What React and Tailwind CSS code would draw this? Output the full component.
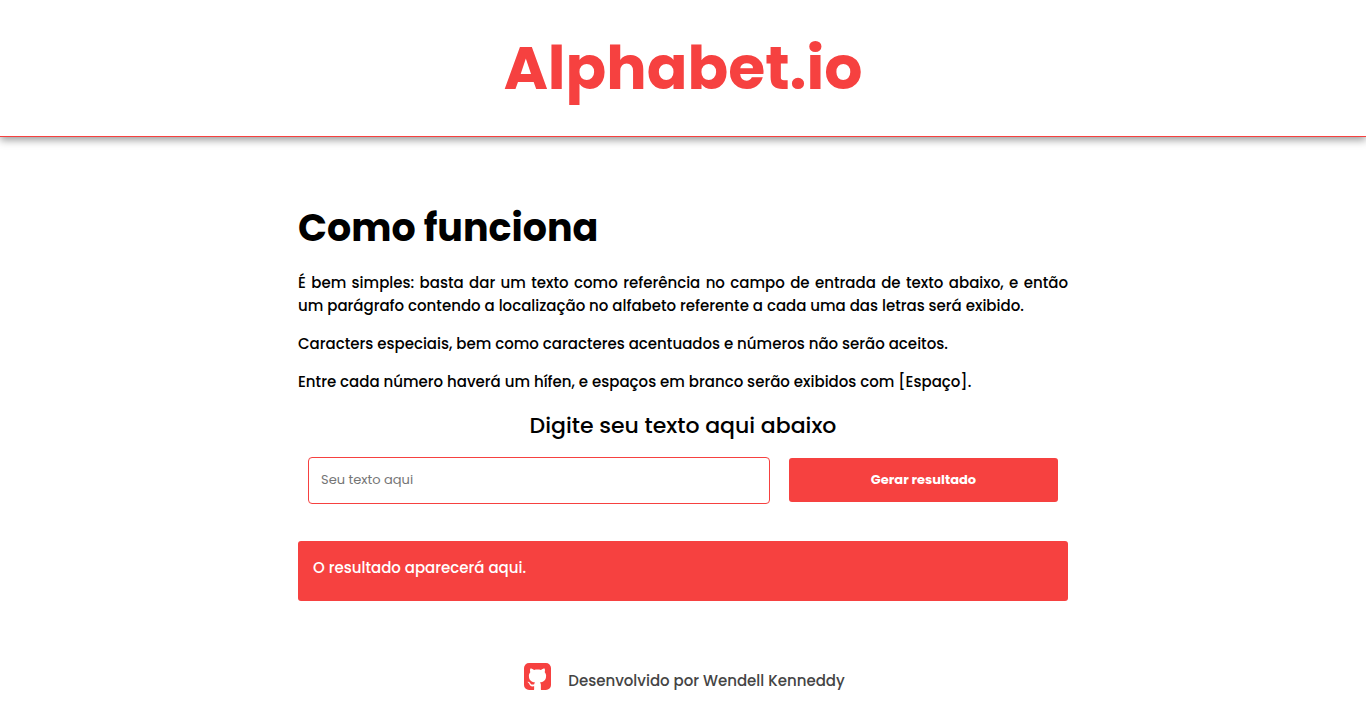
function GithubSquareIcon({ className }) {
  return (
    <svg viewBox="2 2 20 20" className={className} fill="currentColor" aria-hidden="true">
      <path d="M5.75,2H18.25A3.75,3.75 0 0,1 22,5.75V18.25A3.75,3.75 0 0,1 18.25,22H15.1C14.5,22 14.5,21.4 14.5,21V18.26C14.5,17.33 14.17,16.72 13.81,16.41C16.04,16.16 18.38,15.32 18.38,11.5C18.38,10.39 18,9.5 17.35,8.79C17.45,8.54 17.8,7.5 17.25,6.15C17.25,6.15 16.41,5.88 14.5,7.17C13.71,6.95 12.85,6.84 12,6.84C11.15,6.84 10.29,6.95 9.5,7.17C7.59,5.88 6.75,6.15 6.75,6.15C6.2,7.5 6.55,8.54 6.65,8.79C6,9.5 5.62,10.39 5.62,11.5C5.62,15.31 7.95,16.17 10.17,16.42C9.89,16.67 9.63,17.11 9.54,17.76C8.97,18 7.5,18.45 6.63,16.93C6.63,16.93 6.1,15.97 5.1,15.9C5.1,15.9 4.12,15.88 5,16.5C5,16.5 5.68,16.81 6.14,17.97C6.14,17.97 6.73,19.91 9.5,19.31V21C9.5,21.4 9.5,22 8.9,22H5.75A3.75,3.75 0 0,1 2,18.25V5.75A3.75,3.75 0 0,1 5.75,2Z" />
    </svg>
  );
}

export default function App() {
  return (
    <div className="bg-white font-[Poppins,'Open_Sans',sans-serif] text-black">
      <header className="flex items-center justify-center border-b border-[#f64140] py-[23px] shadow-[0_3px_8px_rgba(0,0,0,0.4)]">
        <h1 className="text-[60px] leading-[90px] font-bold text-[#f64140]">Alphabet.io</h1>
      </header>
      <main className="mx-auto mt-[61px] w-full max-w-[770px]">
        <h2 className="text-[38px] leading-[60px] font-bold">Como funciona</h2>
        <div className="mt-[13px] flex flex-col gap-[15px] text-justify text-[15px] leading-[23px] font-medium">
          <p>É bem simples: basta dar um texto como referência no campo de entrada de texto abaixo, e então um parágrafo contendo a localização no alfabeto referente a cada uma das letras será exibido.</p>
          <p>Caracters especiais, bem como caracteres acentuados e números não serão aceitos.</p>
          <p>Entre cada número haverá um hífen, e espaços em branco serão exibidos com [Espaço].</p>
        </div>
        <form className="mt-[15px]" onSubmit={(e) => e.preventDefault()}>
          <label htmlFor="texto" className="block text-center text-[22px] leading-[35px] font-medium">Digite seu texto aqui abaixo</label>
          <div className="mt-[14px] flex items-start gap-[19px] px-[10px]">
            <input id="texto" placeholder="Seu texto aqui" className="h-[47px] min-w-0 basis-[462px] rounded-[4px] border border-[#f64140] px-3 pb-[2px] text-[13px] outline-none placeholder:text-[#757575]" />
            <button className="mt-px h-11 min-w-0 flex-1 rounded-[3px] bg-[#f64140] text-[13px] font-bold text-white">Gerar resultado</button>
          </div>
        </form>
        <div className="mt-[37px] rounded-[3px] bg-[#f64140] px-[15px] pt-[15px] pb-[22px] text-[15px] leading-[23px] font-medium text-white">
          <p>O resultado aparecerá aqui.</p>
        </div>
      </main>
      <footer className="mt-[62px] flex items-start justify-center gap-[17px] pl-[3px]">
        <a href="https://github.com" aria-label="GitHub"><GithubSquareIcon className="size-[27px] text-[#f64140]" /></a>
        <p className="mt-[6px] text-[15px] leading-[23px] font-medium text-[#444]">Desenvolvido por Wendell Kenneddy</p>
      </footer>
    </div>
  );
}
